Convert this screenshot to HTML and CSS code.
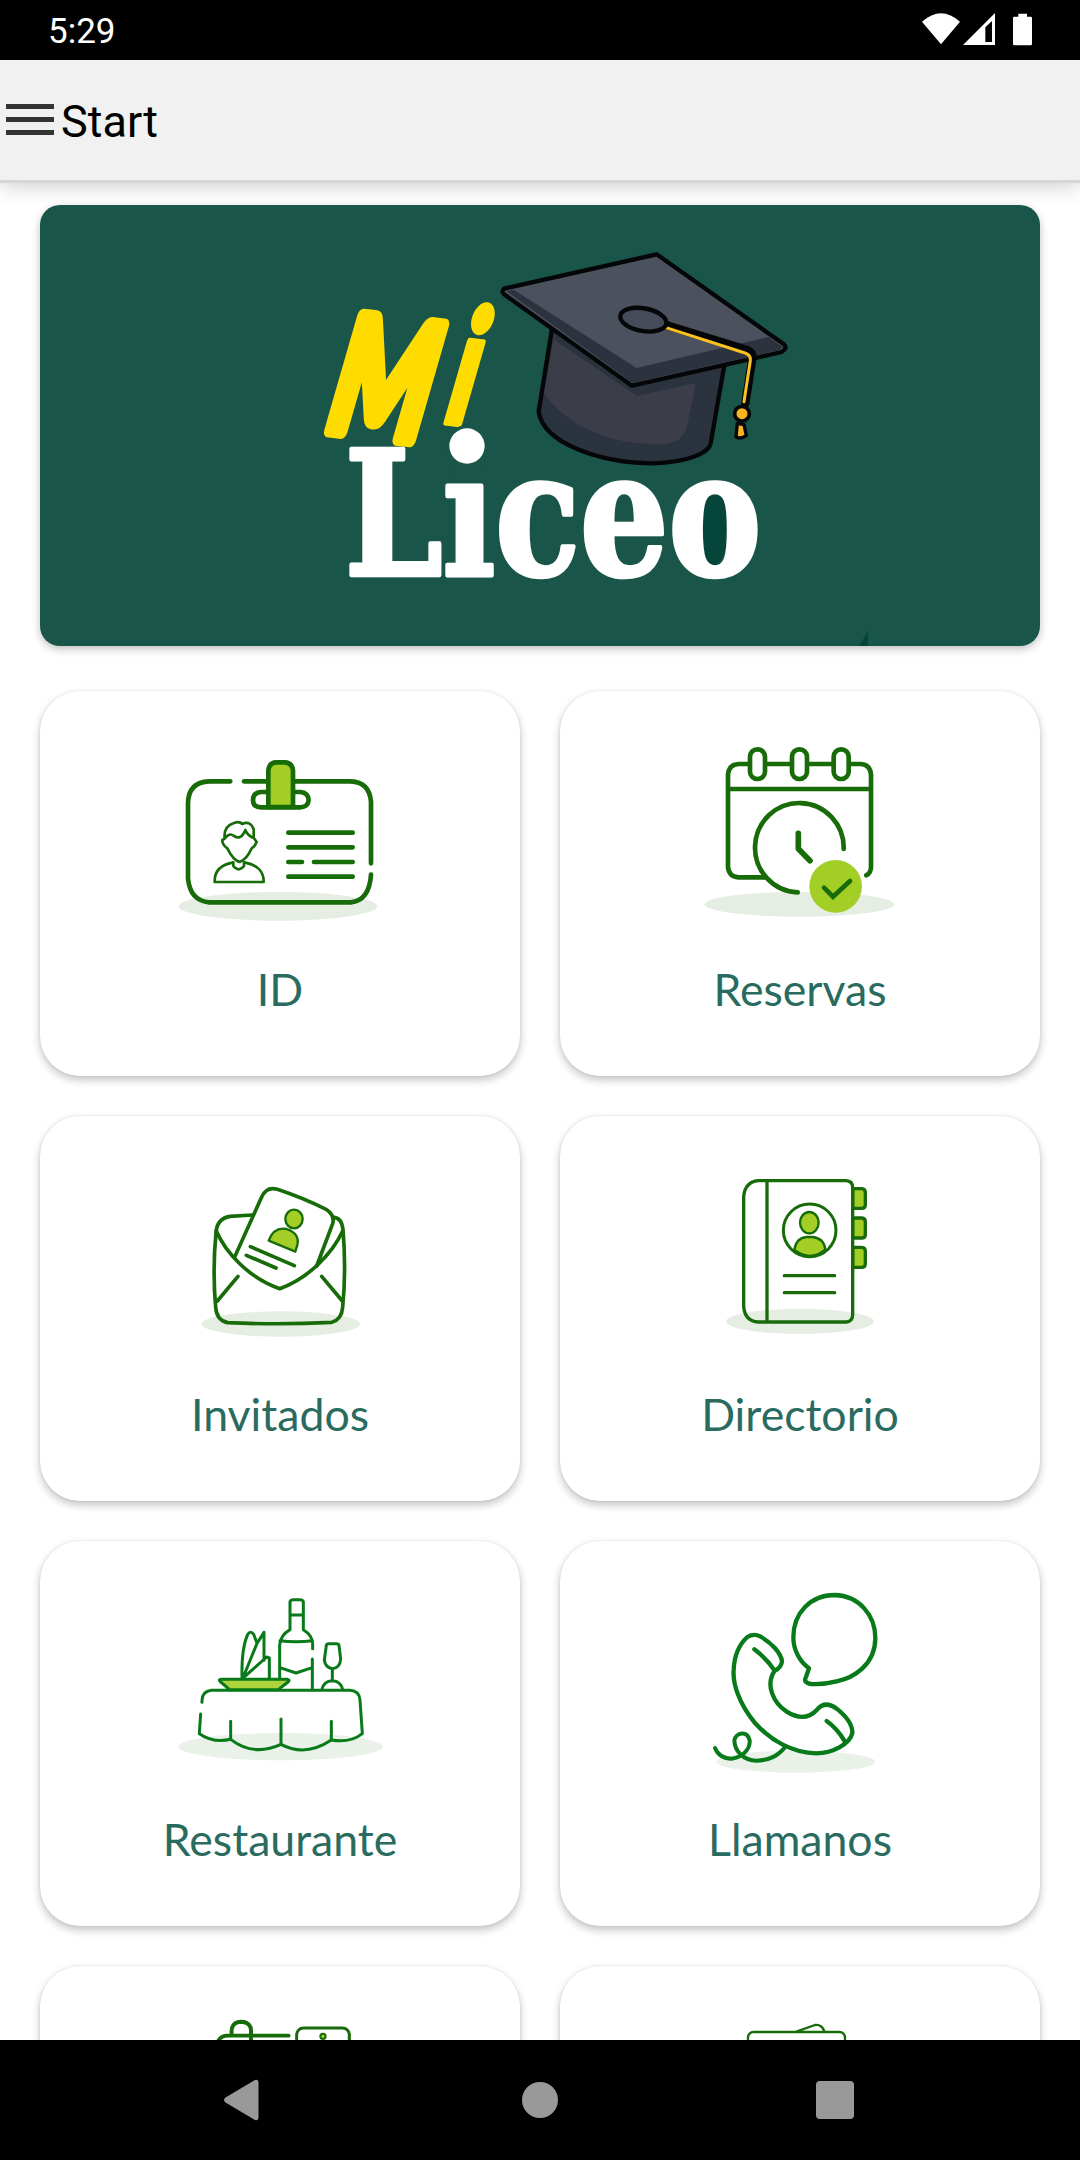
FILE: index.html
```html
<!DOCTYPE html>
<html lang="es">
<head>
  <meta charset="UTF-8">
  <meta name="viewport" content="width=device-width, initial-scale=1.0">
  <title>Mi Liceo</title>
  <link rel="stylesheet" href="styles.css">
</head>
<body>
  <!-- Barra de estado -->
  <div class="statusBar">
    <span class="time">5:29</span>
    <svg class="statusIcons" viewBox="0 0 348 180">
      <path d="M6 65Q63 14 120 65L63 133Z"/>
      <path fill-rule="evenodd" d="M129 135L225 39V135ZM196 82V126H216V63Z"/>
      <path d="M295 41h26v9h11a4 4 0 0 1 4 4v78a4 4 0 0 1-4 4h-49a4 4 0 0 1-4-4V54a4 4 0 0 1 4-4h12z"/>
    </svg>
  </div>

  <!-- Cabecera -->
  <header class="topBar">
    <button class="menuButton" aria-label="Menu"><i></i><i></i><i></i></button>
    <h1>Start</h1>
  </header>

  <main class="content">
    <!-- Logo -->
    <div class="banner">
      <svg viewBox="0 0 1000 441">
        <path d="M819 441L828 426V441Z" fill="#06463a"/>
        <g transform="translate(260 25) scale(.33333)">
          <!-- Birrete -->
          <g stroke="#050608" stroke-width="13" stroke-linejoin="round" stroke-linecap="round">
            <path d="M757 290L716 545C730 640 900 700 1060 700C1160 697 1226 670 1232 640L1274 400Z" fill="#2b333e"/>
            <path d="M764 310L732 490C800 590 930 645 1085 643C1145 640 1158 610 1165 570L1188 458L1010 497L764 330Z" fill="#3b3d49" stroke="none"/>
            <path d="M1000 470L1188 430V458L1010 497L970 470Z" fill="#2b333e" stroke="none"/>
            <path d="M1070 73L612 176Q602 186 614 194L996 467L1445 366Q1464 354 1452 343Z" fill="#4c525d"/>
            <path d="M620 184L642 180L1010 414L1405 321L1447 350L1440 360L998 459Z" fill="#2c333f" stroke="none"/>
            <path d="M1098 285L1342 360Q1360 369 1357 386L1336 520" fill="none" stroke-width="25"/>
            <path d="M1098 293L1335 369Q1353 375 1351 392L1332 515" fill="none" stroke="#fbc11e" stroke-width="9"/>
            <ellipse cx="1030" cy="269" rx="70" ry="34" transform="rotate(10 1030 269)" fill="#454b57"/>
            <circle cx="1326" cy="551" r="22" fill="#fbb321" stroke-width="11"/>
            <path d="M1312 580L1332 584L1339 616Q1324 629 1308 621Z" fill="#fbb321" stroke-width="10"/>
          </g>
          <text class="logoMi" transform="matrix(1.4 .17 -.62 2.15 64 598)">M<tspan class="thin" x="240" y="-30">i</tspan></text>
          <ellipse cx="1240" cy="890" rx="44" ry="118" fill="#06463a"/>
          <text class="logoLiceo" x="134" y="1034" textLength="1250" lengthAdjust="spacingAndGlyphs">Liceo</text>
          <!-- Punto de la i -->
          <path d="M440 646a61 61 0 0 1 122 0L550 750H452Z" fill="#1a554a"/>
          <circle cx="501" cy="648" r="53" fill="#fff"/>
        </g>
      </svg>
    </div>

    <!-- Opciones -->
    <div class="grid">
      <a class="card">
        <svg class="icon" viewBox="0 0 720 600">
          <g transform="translate(0 27)">
            <ellipse class="shade" cx="354" cy="499" rx="298" ry="43"/>
            <g stroke-width="14">
              <path d="M211 124H148Q85 126 84 190V415Q90 482 148 487H572Q628 482 633 404M633 370V185Q628 126 572 124H400M320 124H252"/>
              <path d="M385 278H578M385 322H578M385 366H426M462 366H578M385 410H578"/>
              <path d="M325 156H302Q279 159 279 180Q279 201 302 202H420Q445 201 446 180Q445 159 422 156H400"/>
              <path class="lime" d="M325 201V92Q327 68 348 67H374Q397 68 399 92V201Z"/>
            </g>
            <g stroke-width="8">
              <path d="M194 296Q190 258 222 249Q238 242 247 252Q270 240 281 268V293L290 306Q284 320 275 325Q261 358 239 366Q219 360 202 325Q186 314 187 300L194 296Q207 276 222 288Q240 299 250 282L256 270Q260 282 276 292"/>
              <path d="M218 368C180 375 163 397 164 426H311C312 397 294 375 256 368"/>
              <path d="M220 367V378Q236 398 252 378V367"/>
            </g>
          </g>
        </svg>
        <span>ID</span>
      </a>
      <a class="card">
        <svg class="icon" viewBox="0 0 720 600">
          <g transform="translate(30 -3)" stroke-width="14">
            <ellipse class="shade" cx="328" cy="523" rx="285" ry="37"/>
            <path d="M226 442H145Q116 440 114 410V134Q116 104 145 102H174M232 102H300M357 102H425M482 102H513Q541 104 543 134V410Q543 428 529 436M114 177H543"/>
            <rect x="180" y="58" width="45" height="89" rx="22"/>
            <rect x="306" y="58" width="45" height="89" rx="22"/>
            <rect x="431" y="58" width="45" height="89" rx="22"/>
            <path d="M323 487A133 134 0 1 1 461 357"/>
            <path d="M325 310V356L360 392" stroke-width="17"/>
            <circle cx="437" cy="469" r="79" fill="#a2ce25" stroke="none"/>
            <path d="M402 473L429 500L480 453" stroke-linejoin="miter"/>
          </g>
        </svg>
        <span>Reservas</span>
      </a>
      <a class="card">
        <svg class="icon" viewBox="0 0 720 600">
          <g transform="translate(60 41)" stroke-width="11">
            <ellipse class="shade" cx="302" cy="463" rx="238" ry="38"/>
            <path d="M217 136L150 140Q110 147 108 190Q97 300 107 413Q110 452 143 459Q300 466 455 458Q485 450 488 413Q499 300 489 180Q485 142 459 143"/>
            <path d="M109 184C135 245 205 325 299 357C390 325 460 245 488 184"/>
            <path d="M164 262L245 82Q260 49 292 59Q370 85 440 120Q465 137 458 162L410 289"/>
            <path d="M211 231L343 288M199 257L288 295M174 320L112 394M425 320L487 394"/>
            <ellipse class="lime" cx="342" cy="148" rx="26" ry="28" stroke-width="7"/>
            <path class="lime" d="M266 213Q282 170 320 178Q360 192 352 226L346 246Z" stroke-width="7"/>
          </g>
        </svg>
        <span>Invitados</span>
      </a>
      <a class="card">
        <svg class="icon" viewBox="0 0 720 600">
          <g transform="translate(30 11)" stroke-width="10">
            <ellipse class="shade" cx="330" cy="485" rx="222" ry="38"/>
            <g class="lime">
              <path d="M488 87H515Q526 88 526 98V135Q526 146 515 146H488Z"/>
              <path d="M488 175H515Q526 176 526 186V225Q526 235 515 235H488Z"/>
              <path d="M488 263H515Q526 264 526 274V312Q526 323 515 323H488Z"/>
            </g>
            <path d="M205 63H468Q488 64 488 84V466Q487 486 468 487H205Q164 484 161 440V110Q165 67 205 63ZM231 63V487"/>
            <path class="lime" d="M313 271Q318 235 350 232H368Q402 236 406 269Q363 307 313 271Z" stroke-width="7"/>
            <ellipse class="lime" cx="358" cy="189" rx="28" ry="32" stroke-width="7"/>
            <circle cx="359" cy="212" r="79" stroke-width="9"/>
            <path d="M283 348H434M283 399H434"/>
          </g>
        </svg>
        <span>Directorio</span>
      </a>
      <a class="card">
        <svg class="icon bright" viewBox="0 0 720 600">
          <g transform="translate(-30 -3)" stroke-width="9">
            <ellipse class="shade" cx="392" cy="500" rx="307" ry="41"/>
            <path d="M156 367Q154 334 184 331H600Q628 333 630 360L637 461Q600 490 544 480Q466 532 393 493Q310 531 242 478Q190 490 148 461L152 402M242 424V478M393 417V493M544 424V478"/>
            <path class="plate" d="M239 329L212 306Q203 298 214 298H413Q421 300 414 306L385 329Z"/>
            <path d="M276 294Q274 205 293 163Q302 151 311 163L321 190L280 291ZM321 190L342 157V241M284 290L350 231L358 234V294"/>
            <path d="M389 294V195Q391 166 420 149V66Q421 59 430 59H450Q459 59 460 66V149Q487 166 488 190V206M487 237V329M420 105H460M390 182Q438 188 487 182M390 263L438 279L487 263"/>
            <path d="M529 196Q530 191 536 191H560Q566 191 567 196L572 237Q570 264 547 266Q526 263 523 240ZM547 266V302M516 328Q521 303 547 302Q572 303 578 328"/>
          </g>
        </svg>
        <span>Restaurante</span>
      </a>
      <a class="card">
        <svg class="icon bright" viewBox="0 0 720 600">
          <g transform="translate(30 -34)" stroke-width="13">
            <ellipse class="shade" cx="317" cy="576" rx="238" ry="33"/>
            <path d="M357 296C328 275 310 240 310 203C310 130 362 76 434 76C508 78 556 138 556 205C556 285 491 325 440 335Q400 345 364 343Q338 339 348 322Z"/>
            <path d="M254 303C225 345 250 400 290 426C325 448 357 446 381 420C399 399 420 402 440 417C465 437 488 465 487 490C480 522 430 550 378 551C310 550 245 515 195 460C145 400 128 340 131 300C133 255 150 222 172 202Q192 190 212 201C245 220 273 250 276 275Q273 295 254 303ZM193 239Q230 267 254 303M410 454Q442 477 463 513"/>
            <path d="M75 535C85 559 105 567 125 567C155 563 181 541 179 512C172 483 138 487 133 512C134 543 158 572 200 573C245 571 264 556 285 533" stroke-width="12"/>
          </g>
        </svg>
        <span>Llamanos</span>
      </a>
      <a class="card">
        <svg class="icon" viewBox="0 0 720 600">
          <g transform="translate(90 -138)">
            <path d="M296 227H110Q84 229 78 260V560H500" stroke-width="11"/>
            <path d="M125 222Q121 186 154 185Q185 187 183 216V300" stroke-width="12"/>
            <rect x="320" y="204" width="158" height="250" rx="20" stroke-width="9"/>
            <circle class="lime" cx="399" cy="229" r="8" stroke-width="6"/>
          </g>
        </svg>
      </a>
      <a class="card">
        <svg class="icon" viewBox="0 0 720 600">
          <g stroke-width="7">
            <rect x="204" y="78" width="291" height="300" rx="16"/>
            <path d="M351 76L405 57Q426 55 433 76"/>
          </g>
        </svg>
      </a>
    </div>
  </main>

  <!-- Botones del sistema -->
  <nav class="navBar">
    <svg viewBox="0 0 1080 120">
      <path d="M225.500 57.500Q222.500 60 225.500 62.500L255 80Q258.500 81 258.500 77V43Q258.500 39 255 40Z"/>
      <circle cx="540" cy="60" r="18"/>
      <rect x="816" y="41" width="38" height="38" rx="4"/>
    </svg>
  </nav>
</body>
</html>
```

FILE: styles.css
```css
* {
  box-sizing: border-box;
}

body {
  margin: 0;
  height: 2160px;
  display: flex;
  flex-direction: column;
  overflow: hidden;
  background-color: #fff;
  font-family: Roboto, "Liberation Sans", sans-serif;
}

/* Barra de estado */
.statusBar {
  flex: none;
  height: 60px;
  padding: 2px 44px 0 48px;
  display: flex;
  align-items: center;
  justify-content: space-between;
  background-color: #000;
  color: #fff;
}
.time {
  font-size: 35px;
}
.statusIcons {
  width: 116px;
  height: 60px;
  margin-top: -2px;
  fill: #fff;
}

/* Cabecera */
.topBar {
  flex: none;
  height: 120px;
  display: flex;
  align-items: center;
  background-color: #f1f1f1;
  box-shadow: 0 3px 0 #d6d6d6, 0 6px 20px rgba(0, 0, 0, 0.2);
}
.topBar h1 {
  margin: 2px 0 0 7px;
  font-size: 45px;
  font-weight: 400;
  color: #000;
}
.menuButton {
  display: flex;
  flex-direction: column;
  gap: 8px;
  width: 48px;
  margin: -2px 0 0 6px;
  padding: 0;
  border: 0;
  background: none;
}
.menuButton i {
  height: 5px;
  background-color: #333;
}

/* Contenido */
.content {
  flex: 1;
  min-height: 0;
  overflow: hidden;
  padding: 25px 40px 0;
}
.banner {
  height: 441px;
  border-radius: 20px;
  overflow: hidden;
  background-color: #1a554a;
  box-shadow: 0 3px 8px rgba(0, 0, 0, 0.25);
}
.banner svg {
  display: block;
}
.logoMi {
  font-family: Lato, sans-serif;
  font-weight: 900;
  font-size: 220px;
  fill: #ffdc00;
  stroke: #ffdc00;
  stroke-width: 20px;
  stroke-linejoin: round;
}
.logoMi .thin {
  stroke-width: 9px;
}
.logoLiceo {
  font-family: "DejaVu Serif", serif;
  font-weight: bold;
  font-size: 516px;
  fill: #fff;
  stroke: #fff;
  stroke-width: 14px;
  stroke-linejoin: round;
}

.grid {
  display: grid;
  grid-template-columns: 1fr 1fr;
  gap: 40px;
  margin-top: 45px;
}
.card {
  height: 385px;
  padding-top: 40px;
  display: flex;
  flex-direction: column;
  align-items: center;
  border-radius: 40px;
  background-color: #fff;
  box-shadow: 0 4px 9px rgba(0, 0, 0, 0.24), 0 0 2px rgba(0, 0, 0, 0.12);
}
.card span {
  margin-top: 31px;
  font-family: Lato, sans-serif;
  font-size: 44.6px;
  line-height: 53px;
  color: #2a6b60;
}

/* Iconos */
.icon {
  width: 240px;
  height: 200px;
  fill: none;
  stroke: #176b08;
  stroke-linecap: round;
  stroke-linejoin: round;
}
.bright {
  stroke: #087a1a;
}
.shade {
  fill: #e6eee4;
  stroke: none;
}
.bright .shade {
  fill: #e9f1e9;
}
.lime {
  fill: #a2ce25;
}
.plate {
  fill: #add43c;
}

/* Botones del sistema */
.navBar {
  flex: none;
  height: 120px;
  background-color: #000;
}
.navBar svg {
  display: block;
  fill: #999;
}
```
